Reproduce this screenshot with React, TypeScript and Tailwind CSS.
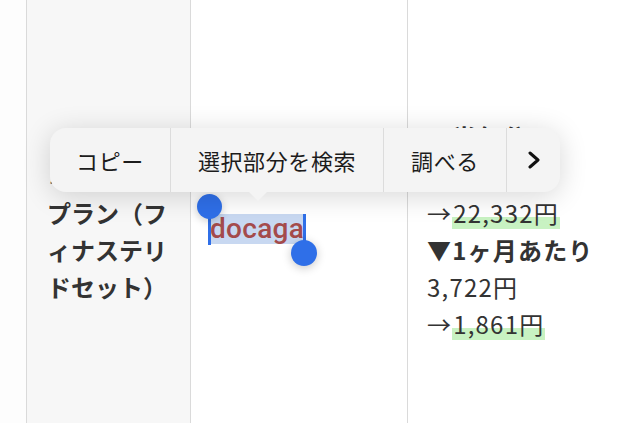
import React from 'react';

const jp = { fontFamily: '"Noto Sans CJK JP", "Noto Sans", sans-serif' };

function Marker({ children }: { children: React.ReactNode }) {
  return (
    <span className="bg-[linear-gradient(transparent_62%,#c8f2c2_62%,#c8f2c2_96%,transparent_96%)] px-px">
      {children}
    </span>
  );
}

function CallMenu() {
  const items = [
    { label: 'コピー', w: 'w-[121px]' },
    { label: '選択部分を検索', w: 'w-[213px]' },
    { label: '調べる', w: 'w-[123px]' },
  ];
  return (
    <div className="absolute left-[50px] top-[128px]">
      <div className="flex h-[64px] w-[510px] overflow-hidden rounded-[16px] bg-[#f4f4f4] shadow-[0_4px_28px_rgba(0,0,0,0.16)]">
        {items.map(item => (
          <div
            key={item.label}
            className={`${item.w} flex items-center justify-center border-r border-[#dcdcdc] text-[22px] tracking-[0.6px] text-[#1c1c1c]`}
          >
            {item.label}
          </div>
        ))}
        <div className="flex flex-1 items-center justify-center">
          <svg width="14" height="18" viewBox="0 0 14 18">
            <path d="M3 2l8 7-8 7" fill="none" stroke="#111" strokeWidth="3" strokeLinecap="round" strokeLinejoin="round" />
          </svg>
        </div>
      </div>
      <div className="absolute left-[198px] top-[63px] h-0 w-0 border-x-[10px] border-t-[10px] border-x-transparent border-t-[#f4f4f4]" />
    </div>
  );
}

export default function App() {
  return (
    <div className="relative h-[423px] w-[640px] overflow-hidden bg-[#fdfdfd]" style={jp}>
      <div className="flex h-full">
        <div className="w-[26px]" />
        <div className="w-[165px] border-x border-[#dadada] bg-[#f7f7f7] pl-[20px] pt-[157px] text-[24px] font-bold leading-[37px] text-[#333]">
          <div>ミノキシ</div>
          <div>プラン（フ</div>
          <div>ィナステリ</div>
          <div>ドセット）</div>
        </div>
        <div className="w-[217px] border-r border-[#dadada] bg-white pl-[17px] pt-[214px]">
          <span className="relative inline-block">
            <span
              className="inline-block bg-[#c8d8f1] px-[2px] text-[28px] font-medium leading-[30px] tracking-[0.3px] text-[#a44b4b]"
              style={{ fontFamily: 'Roboto, "Liberation Sans", sans-serif' }}
            >
              docaga
            </span>
            <span className="absolute left-0 top-[-8px] h-[39px] w-[3px] bg-[#2f6fe8]" />
            <span className="absolute left-[-11px] top-[-20px] h-[25px] w-[25px] rounded-full bg-[#2f6fe8] shadow-[0_2px_8px_rgba(0,0,0,0.2)]" />
            <span className="absolute right-0 top-0 h-[33px] w-[3px] bg-[#2f6fe8]" />
            <span className="absolute right-[-11px] top-[26px] h-[26px] w-[26px] rounded-full bg-[#2f6fe8] shadow-[0_2px_10px_rgba(0,0,0,0.22)]" />
          </span>
        </div>
        <div className="flex-1 bg-white pl-[19px] pt-[118px] text-[24px] leading-[37px] tracking-[1.2px] text-[#333]">
          <div className="font-bold">▼半年分</div>
          <div className="pt-[2px]">44,664円</div>
          <div>
            →<Marker>22,332円</Marker>
          </div>
          <div className="font-bold">▼1ヶ月あたり</div>
          <div>3,722円</div>
          <div>
            →<Marker>1,861円</Marker>
          </div>
        </div>
      </div>
      <CallMenu />
    </div>
  );
}
